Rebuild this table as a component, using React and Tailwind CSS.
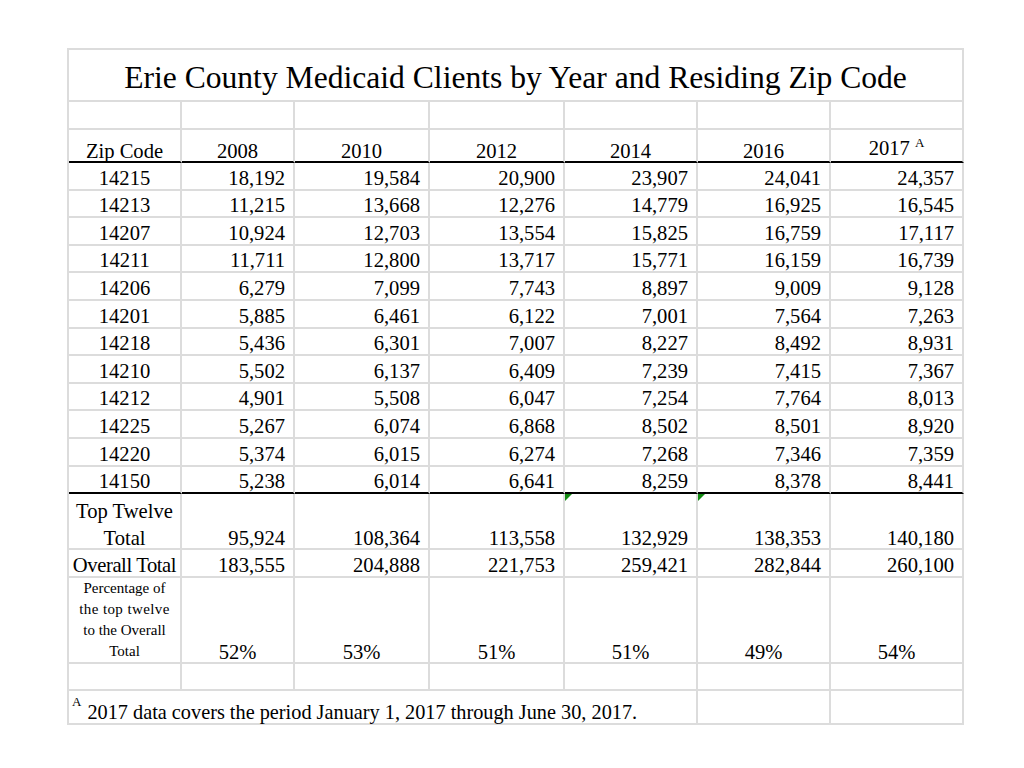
const years = ["2008", "2010", "2012", "2014", "2016", "2017"];

const rows = [
  ["14215", "18,192", "19,584", "20,900", "23,907", "24,041", "24,357"],
  ["14213", "11,215", "13,668", "12,276", "14,779", "16,925", "16,545"],
  ["14207", "10,924", "12,703", "13,554", "15,825", "16,759", "17,117"],
  ["14211", "11,711", "12,800", "13,717", "15,771", "16,159", "16,739"],
  ["14206", "6,279", "7,099", "7,743", "8,897", "9,009", "9,128"],
  ["14201", "5,885", "6,461", "6,122", "7,001", "7,564", "7,263"],
  ["14218", "5,436", "6,301", "7,007", "8,227", "8,492", "8,931"],
  ["14210", "5,502", "6,137", "6,409", "7,239", "7,415", "7,367"],
  ["14212", "4,901", "5,508", "6,047", "7,254", "7,764", "8,013"],
  ["14225", "5,267", "6,074", "6,868", "8,502", "8,501", "8,920"],
  ["14220", "5,374", "6,015", "6,274", "7,268", "7,346", "7,359"],
  ["14150", "5,238", "6,014", "6,641", "8,259", "8,378", "8,441"],
];

const topTwelve = ["95,924", "108,364", "113,558", "132,929", "138,353", "140,180"];
const overall = ["183,555", "204,888", "221,753", "259,421", "282,844", "260,100"];
const pct = ["52%", "53%", "51%", "51%", "49%", "54%"];

const line = "border-r-2 border-b-2 border-r-[#dcdcdc] border-b-[#dcdcdc]";
const thick = "border-r-2 border-b-2 border-r-[#dcdcdc] border-b-black";

function ErrorMark() {
  return (
    <svg className="absolute left-0 top-0" width="7" height="7" viewBox="0 0 7 7">
      <polygon points="0,0 7,0 0,7" fill="#118a11" />
    </svg>
  );
}

export default function App() {
  return (
    <div className="w-[1024px] h-[768px] bg-white pt-[48px] pl-[67px] font-['Liberation_Serif',serif] text-black">
      <div className="grid w-[897px] grid-cols-[113px_113px_135px_135px_133px_133px_133px] border-l-2 border-t-2 border-[#dcdcdc]">
        {/* title */}
        <div className={`col-span-7 h-[52px] flex items-center justify-center pt-[5px] text-[31.6px] ${line}`}>
          Erie County Medicaid Clients by Year and Residing Zip Code
        </div>

        {/* blank */}
        {Array.from({ length: 7 }).map((_, i) => (
          <div key={"b" + i} className={`h-[28px] ${line}`} />
        ))}

        {/* header */}
        <div className={`h-[33px] flex items-end justify-center text-[20.6px] leading-[20px] ${thick}`}>
          <span className="whitespace-nowrap">Zip Code</span>
        </div>
        {years.map((y) => (
          <div key={y} className={`h-[33px] flex items-end justify-center text-[20.6px] leading-[20px] ${thick}`}>
            {y === "2017" ? (
              <span className="relative">
                2017{" "}
                <span className="relative -top-[8px] text-[13px]">A</span>
              </span>
            ) : (
              y
            )}
          </div>
        ))}

        {/* data */}
        {rows.map((r, ri) =>
          r.map((v, ci) => (
            <div
              key={ri + "-" + ci}
              className={`h-[27.6px] flex items-end text-[20.6px] leading-[22px] ${
                ci === 0 ? "justify-center" : "justify-end pr-[8px]"
              } ${ri === rows.length - 1 ? thick : line}`}
            >
              {v}
            </div>
          ))
        )}

        {/* top twelve */}
        <div className={`h-[56px] flex flex-col items-center justify-end text-[20.6px] leading-[20px] ${line}`}>
          <div className="mb-[7px] whitespace-nowrap">Top Twelve</div>
          <div>Total</div>
        </div>
        {topTwelve.map((v, i) => (
          <div key={"t" + i} className={`relative h-[56px] flex items-end justify-end pr-[8px] text-[20.6px] leading-[20px] ${line}`}>
            {(i === 3 || i === 4) && <ErrorMark />}
            {v}
          </div>
        ))}

        {/* overall */}
        <div className={`h-[28px] flex items-end justify-center text-[20.6px] leading-[22px] ${line}`}>
          <span className="tracking-[-0.4px] whitespace-nowrap">Overall Total</span>
        </div>
        {overall.map((v, i) => (
          <div key={"o" + i} className={`h-[28px] flex items-end justify-end pr-[8px] text-[20.6px] leading-[22px] ${line}`}>
            {v}
          </div>
        ))}

        {/* percentage */}
        <div className={`h-[86px] flex flex-col items-center justify-end text-[15px] leading-[21px] ${line}`}>
          <div>Percentage of</div>
          <div className="tracking-[0.4px]">the top twelve</div>
          <div>to the Overall</div>
          <div>Total</div>
        </div>
        {pct.map((v, i) => (
          <div key={"p" + i} className={`h-[86px] flex items-end justify-center text-[20.6px] leading-[20px] ${line}`}>
            {v}
          </div>
        ))}

        {/* blank */}
        {Array.from({ length: 7 }).map((_, i) => (
          <div key={"c" + i} className={`h-[27px] ${line}`} />
        ))}

        {/* footnote */}
        <div className={`col-span-5 h-[34px] flex items-end pl-[3px] text-[20.3px] leading-[22px] ${line}`}>
          <span className="relative -top-[10px] text-[13px] mr-[6px]">A</span>
          <span className="whitespace-nowrap">2017 data covers the period January 1, 2017 through June 30, 2017.</span>
        </div>
        <div className={`h-[34px] ${line}`} />
        <div className={`h-[34px] ${line}`} />
      </div>
    </div>
  );
}
